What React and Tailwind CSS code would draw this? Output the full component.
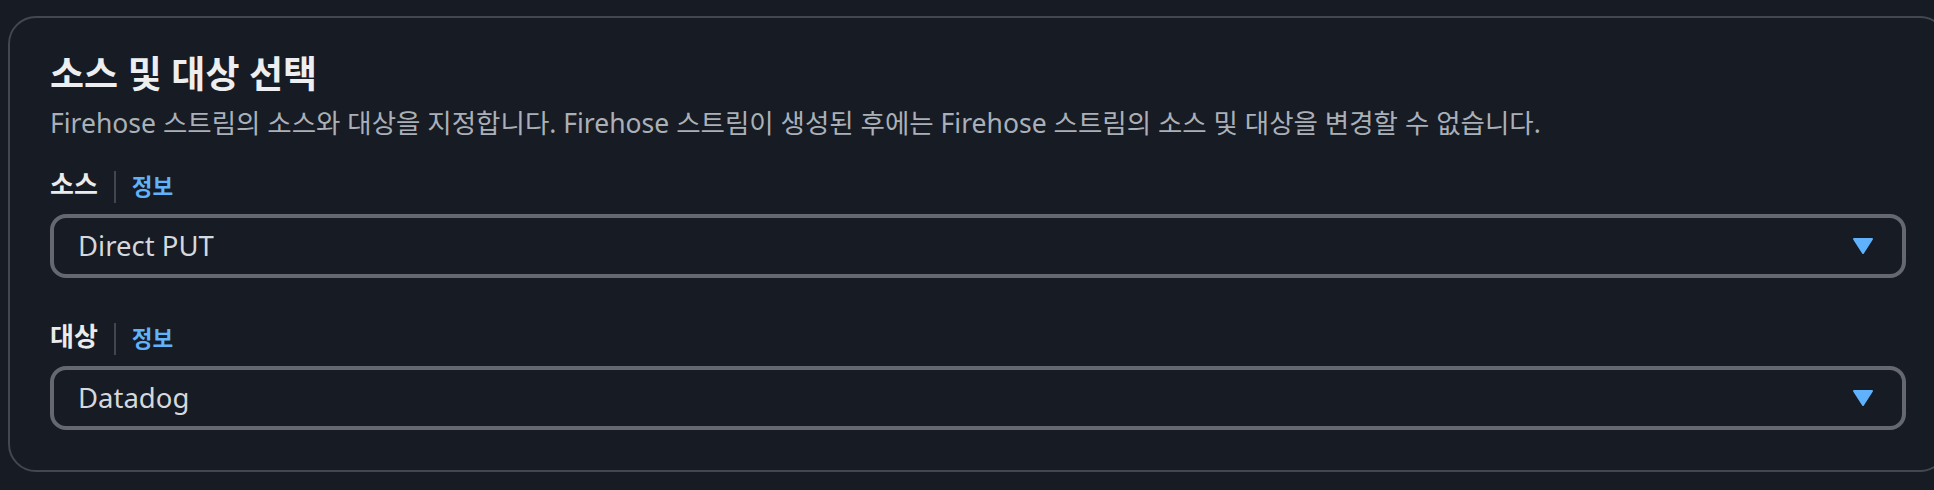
import React from "react";

const FONT = { fontFamily: '"Noto Sans", "Noto Sans CJK KR", sans-serif' };

function Caret() {
  return (
    <svg width="22" height="18" viewBox="0 0 22 18" aria-hidden="true">
      <polygon
        points="2,2 20,2 11,16"
        fill="#5fb2fb"
        stroke="#5fb2fb"
        strokeWidth="2"
        strokeLinejoin="round"
      />
    </svg>
  );
}

function FieldLabel({ children }) {
  return (
    <div className="flex items-start h-[32px]">
      <span className="text-[26px] leading-[26px] font-bold text-[#e9ebed]">{children}</span>
      <span className="w-[2px] h-[32px] bg-[#424650] ml-[16px] mr-[16px]" />
      <a className="text-[22.5px] leading-[26px] pt-[3px] font-bold text-[#5fb2fb]">정보</a>
    </div>
  );
}

function SelectBox({ value }) {
  return (
    <div className="mt-[11px] h-[64px] flex items-center justify-between rounded-[16px] border-[4px] border-[#656871] pl-[24px] pr-[28px]">
      <span className="text-[27.5px] leading-[36px] text-[#d5d8dd]">{value}</span>
      <Caret />
    </div>
  );
}

export default function App() {
  return (
    <div className="w-full min-h-[490px] bg-[#171b23] overflow-hidden" style={FONT}>
      <div className="ml-[8px] pt-[16px]">
        <section className="w-[1940px] rounded-[28px] border-[2px] border-[#43474f] px-[40px] pt-[34px] pb-[40px]">
          <h2 className="text-[37px] leading-[44px] font-bold text-[#eceef0]">
            소스 및 대상 선택
          </h2>
          <p className="mt-[9px] text-[26.5px] leading-[36px] text-[#aab0b8]">
            Firehose 스트림의 소스와 대상을 지정합니다. Firehose 스트림이 생성된 후에는 Firehose 스트림의 소스 및 대상을 변경할 수 없습니다.
          </p>

          <div className="mt-[30px]">
            <FieldLabel>소스</FieldLabel>
            <SelectBox value="Direct PUT" />
          </div>

          <div className="mt-[45px]">
            <FieldLabel>대상</FieldLabel>
            <SelectBox value="Datadog" />
          </div>
        </section>
      </div>
    </div>
  );
}
